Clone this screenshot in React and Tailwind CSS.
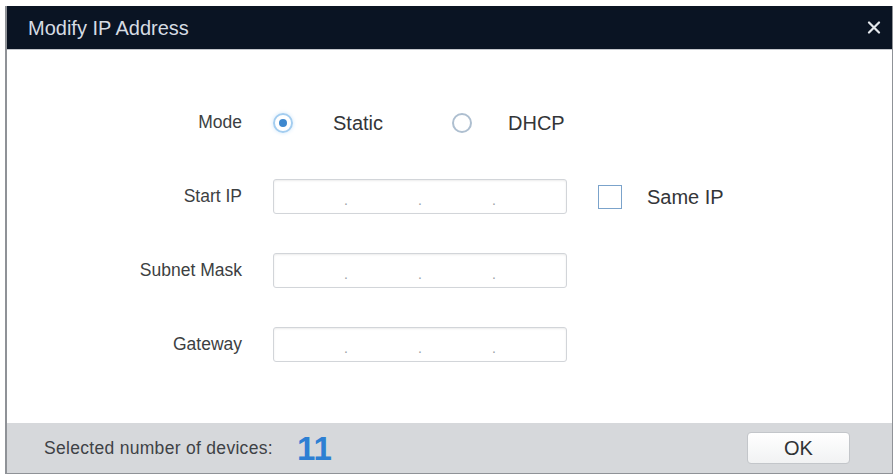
import React from 'react'

const font = { fontFamily: '"Liberation Sans", Arial, sans-serif' }

const IpField = () => (
  <div className='flex items-center w-[294px] h-[35px] border border-[#d2d5d9] rounded-[3px] bg-white shadow-[inset_0_1px_2px_rgba(0,0,0,0.08)] pt-[7px] text-[14px] leading-none text-[#9ca1a7]'>
    <span className='flex-1' />
    <span>.</span>
    <span className='flex-1' />
    <span>.</span>
    <span className='flex-1' />
    <span>.</span>
    <span className='flex-1' />
  </div>
)

const Row = ({ label, children }) => (
  <div className='flex items-center h-[35px] gap-x-[31px]'>
    <div className='w-[235px] text-right text-[17.5px] text-[#3d3f42]'>{label}</div>
    <div className='flex items-center'>{children}</div>
  </div>
)

export default function App() {
  return (
    <div className='w-[895px] h-[476px] bg-white pt-[6px] pl-[5px]' style={font}>
      <div className='flex flex-col w-[888px] h-[468px] border-l-2 border-r border-b border-[#8f9297] bg-white'>
        {/* title bar */}
        <div className='flex items-center justify-between h-[43px] bg-[#0a1423] pl-[21px] pr-[10px]'>
          <span className='text-[20px] text-[#d6dce3]'>Modify IP Address</span>
          <svg width='14' height='13' viewBox='0 0 14 13' className='mr-[1px]'>
            <path d='M2 1.5 L12 11.5 M12 1.5 L2 11.5' stroke='#e4e8ec' strokeWidth='2.2' strokeLinecap='round' />
          </svg>
        </div>

        {/* form */}
        <div className='flex-1 flex flex-col gap-y-[39px] pt-[55px] border-t border-[#c4c7cc]'>
          <Row label='Mode'>
            <div className='flex items-center justify-center w-[20px] h-[20px] rounded-full border-2 border-[#a3cdf0] shadow-[0_0_4px_#cfe6fa]'>
              <div className='w-[8px] h-[8px] rounded-full bg-[#3d88cf]' />
            </div>
            <span className='ml-[40px] text-[20px] text-[#333538]'>Static</span>
            <div className='ml-[69px] w-[20px] h-[20px] rounded-full border-2 border-[#aebfd0]' />
            <span className='ml-[36px] text-[20px] text-[#333538]'>DHCP</span>
          </Row>
          <Row label='Start IP'>
            <IpField />
            <div className='ml-[31px] w-[24px] h-[24px] border-[1.5px] border-[#7ba3cb] bg-white' />
            <span className='ml-[25px] text-[20px] text-[#333538]'>Same IP</span>
          </Row>
          <Row label='Subnet Mask'>
            <IpField />
          </Row>
          <Row label='Gateway'>
            <IpField />
          </Row>
        </div>

        {/* footer */}
        <div className='flex items-center justify-between h-[50px] bg-[#d6d8db] pl-[37px] pr-[42px]'>
          <div className='flex items-center'>
            <span className='text-[17.5px] tracking-[0.3px] text-[#3e4246]'>Selected number of devices:</span>
            <span className='ml-[24px] text-[33px] font-bold leading-none text-[#2d7fd3]'>11</span>
          </div>
          <button className='w-[103px] h-[32px] rounded-[4px] border border-[#c3c6ca] bg-gradient-to-b from-white to-[#f1f2f3] text-[20px] text-[#2f3235]'>
            OK
          </button>
        </div>
      </div>
    </div>
  )
}
